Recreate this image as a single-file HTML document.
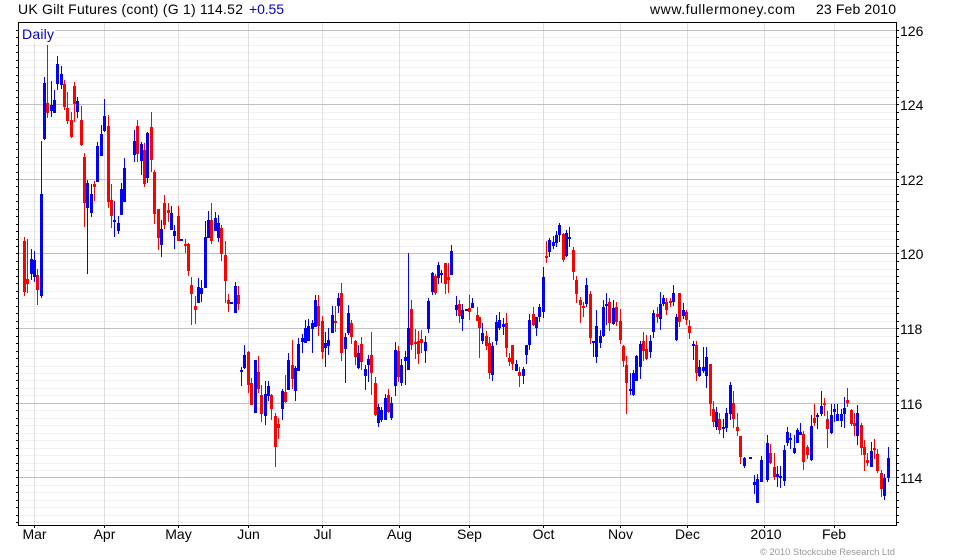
<!DOCTYPE html>
<html><head><meta charset="utf-8"><title>UK Gilt Futures</title>
<style>
html,body{margin:0;padding:0;background:#fff;width:980px;height:560px;overflow:hidden}
svg{display:block}
text{font-family:"Liberation Sans",Arial,sans-serif;font-size:14px;fill:#000}
path,rect{shape-rendering:crispEdges}
</style></head><body>
<svg width="980" height="560" viewBox="0 0 980 560" xmlns="http://www.w3.org/2000/svg">
<rect width="980" height="560" fill="#fff"/>
<defs><path id="h" fill="none" d="M15 30.5H899M15 37.5H899M15 45.5H899M15 52.5H899M15 60.5H899M15 67.5H899M15 75.5H899M15 82.5H899M15 90.5H899M15 97.5H899M15 104.5H899M15 112.5H899M15 119.5H899M15 127.5H899M15 134.5H899M15 142.5H899M15 149.5H899M15 157.5H899M15 164.5H899M15 172.5H899M15 179.5H899M15 186.5H899M15 194.5H899M15 201.5H899M15 209.5H899M15 216.5H899M15 224.5H899M15 231.5H899M15 239.5H899M15 246.5H899M15 253.5H899M15 261.5H899M15 269.5H899M15 276.5H899M15 283.5H899M15 291.5H899M15 298.5H899M15 306.5H899M15 313.5H899M15 321.5H899M15 328.5H899M15 336.5H899M15 343.5H899M15 351.5H899M15 358.5H899M15 366.5H899M15 373.5H899M15 380.5H899M15 388.5H899M15 395.5H899M15 403.5H899M15 410.5H899M15 418.5H899M15 425.5H899M15 433.5H899M15 440.5H899M15 448.5H899M15 455.5H899M15 463.5H899M15 470.5H899M15 477.5H899M15 485.5H899M15 492.5H899M15 500.5H899M15 507.5H899M15 515.5H899M15 522.5H899"/></defs>
<use href="#h" stroke="#000"/>
<rect x="0" y="0" width="16" height="560" fill="#fff"/>
<rect x="19" y="23" width="877" height="502" fill="#fff"/>
<use href="#h" stroke="#f0f0f0" clip-path="url(#plot)"/>
<clipPath id="plot"><rect x="19" y="23" width="877" height="502"/></clipPath>
<path fill="none" stroke="#ddd" d="M34.5 23V528M104.5 23V528M178.5 23V528M248.5 23V528M322.5 23V528M399.5 23V528M469.5 23V528M543.5 23V528M620.5 23V528M687.5 23V528M764.5 23V528M834.5 23V528"/>
<path fill="none" stroke="#c0c0c0" d="M19 30.5H896M19 104.5H896M19 179.5H896M19 253.5H896M19 328.5H896M19 403.5H896M19 477.5H896"/>
<path fill="none" stroke="#f00" d="M24.5 237V296M27.5 239V293M37.5 269V305M47.5 45V118M64.5 80V110M67.5 92V124M71.5 112V138M74.5 82V122M81.5 106V146M84.5 153V227M94.5 181V201M108.5 115V208M111.5 184V228M137.5 120V162M144.5 143V187M151.5 112V172M154.5 170V224M158.5 209V250M164.5 195V229M168.5 203V222M178.5 206V241M185.5 239V253M188.5 243V276M191.5 277V325M195.5 296V324M211.5 203V244M221.5 225V261M225.5 241V303M228.5 294V312M238.5 286V310M248.5 351V393M251.5 378V405M258.5 356V393M261.5 385V422M271.5 394V420M275.5 413V467M278.5 418V439M285.5 375V403M292.5 340V389M318.5 295V336M322.5 316V359M335.5 306V332M341.5 283V361M351.5 320V344M355.5 340V365M361.5 337V370M371.5 332V395M375.5 377V416M388.5 389V413M398.5 346V382M411.5 300V350M415.5 329V359M418.5 331V364M421.5 330V353M435.5 274V295M445.5 263V294M448.5 263V293M459.5 300V323M469.5 295V320M477.5 307V321M479.5 317V358M486.5 331V350M489.5 337V379M506.5 313V357M509.5 353V366M512.5 345V370M519.5 367V387M533.5 307V326M546.5 241V263M563.5 233V262M573.5 247V280M576.5 276V303M580.5 297V323M583.5 302V317M590.5 291V344M609.5 298V331M616.5 302V326M620.5 309V344M623.5 345V367M626.5 356V414M643.5 332V361M646.5 335V360M657.5 307V323M666.5 298V315M670.5 298V307M679.5 293V327M686.5 310V325M689.5 320V339M696.5 341V381M710.5 364V416M713.5 401V427M719.5 413V434M733.5 391V428M737.5 413V436M740.5 436V464M770.5 444V464M774.5 453V480M803.5 431V470M807.5 445V459M814.5 404V426M824.5 398V416M827.5 411V448M847.5 388V407M851.5 409V426M854.5 413V436M861.5 423V455M864.5 440V471M867.5 453V466M874.5 439V459M877.5 449V473M881.5 470V497"/>
<path fill="none" stroke="#f00" stroke-width="3" d="M24.5 241V292M27.5 279V284M37.5 275V290M47.5 103V113M64.5 84V107M67.5 108V121M71.5 120V137M74.5 86V104M81.5 120V145M84.5 157V203M94.5 184V187M108.5 126V202M111.5 200V216M137.5 126V154M144.5 150V184M151.5 127V160M154.5 172V214M158.5 209V238M164.5 203V225M168.5 210V213M178.5 216V241M185.5 244V246M188.5 244V271M191.5 285V294M195.5 306V310M211.5 220V241M221.5 228V254M225.5 255V281M228.5 300V304M238.5 295V304M248.5 352V385M251.5 383V405M258.5 372V389M261.5 395V414M271.5 395V409M275.5 416V447M278.5 424V428M285.5 392V402M292.5 365V379M318.5 306V326M322.5 321V352M335.5 321V323M341.5 293V353M351.5 323V337M355.5 341V357M361.5 344V362M371.5 355V373M375.5 383V415M388.5 395V412M398.5 351V377M411.5 309V345M415.5 342V344M418.5 341V354M421.5 339V343M435.5 276V293M445.5 263V284M448.5 277V280M459.5 304V316M469.5 308V312M477.5 315V321M479.5 317V328M486.5 336V346M489.5 343V373M506.5 323V348M509.5 358V362M512.5 345V364M519.5 372V376M533.5 314V325M546.5 256V258M563.5 234V260M573.5 250V272M576.5 280V294M580.5 300V305M583.5 306V308M590.5 294V338M609.5 302V323M616.5 307V322M620.5 321V340M623.5 346V361M626.5 365V383M643.5 341V351M646.5 349V359M657.5 314V317M666.5 302V310M670.5 301V303M679.5 293V322M686.5 312V320M689.5 326V333M696.5 345V373M710.5 364V404M713.5 409V422M719.5 419V430M733.5 403V419M737.5 427V431M740.5 436V457M770.5 453V463M774.5 467V477M803.5 434V462M807.5 447V455M814.5 418V423M824.5 403V405M827.5 419V429M847.5 400V403M851.5 410V424M854.5 423V426M861.5 425V448M864.5 447V455M867.5 460V463M874.5 448V450M877.5 454V471M881.5 473V489"/>
<path fill="none" stroke="#00f" d="M31.5 249V280M34.5 251V282M41.5 141V298M44.5 77V140M51.5 81V117M54.5 90V113M57.5 56V90M61.5 66V89M77.5 97V118M87.5 180V274M91.5 184V217M97.5 142V182M101.5 125V156M104.5 99V132M114.5 201V237M118.5 216V234M121.5 183V215M124.5 158V202M134.5 130V162M141.5 142V175M147.5 132V183M161.5 220V257M171.5 206V230M174.5 225V249M198.5 278V303M201.5 280V302M205.5 221V288M208.5 211V238M215.5 212V231M218.5 215V242M235.5 282V313M241.5 367V386M244.5 345V369M255.5 360V413M265.5 381V425M268.5 381V401M282.5 389V420M288.5 353V390M295.5 366V401M298.5 338V371M302.5 334V353M305.5 320V343M308.5 319V341M312.5 320V353M315.5 295V327M325.5 332V367M328.5 328V355M332.5 306V333M338.5 293V313M345.5 333V383M348.5 305V335M358.5 345V369M365.5 365V390M368.5 355V382M378.5 404V427M381.5 407V422M385.5 394V420M391.5 397V420M395.5 342V396M401.5 359V386M405.5 351V385M408.5 253V370M425.5 336V363M428.5 298V333M432.5 272V295M438.5 262V284M441.5 270V283M451.5 245V275M456.5 296V316M462.5 304V331M472.5 298V308M482.5 323V344M492.5 342V381M496.5 315V345M499.5 312V330M503.5 318V335M516.5 360V371M523.5 367V384M526.5 345V364M529.5 314V350M536.5 317V336M539.5 304V322M543.5 267V318M549.5 238V257M553.5 236V249M556.5 231V247M559.5 223V242M566.5 230V257M569.5 227V247M586.5 278V307M593.5 341V357M596.5 310V363M600.5 330V348M603.5 300V337M606.5 293V325M613.5 300V325M630.5 373V395M633.5 370V396M636.5 355V381M640.5 341V379M650.5 335V358M653.5 310V338M660.5 292V330M663.5 295V306M673.5 285V306M676.5 314V341M683.5 303V319M693.5 341V360M699.5 360V377M703.5 347V373M706.5 347V388M716.5 407V430M723.5 419V438M726.5 408V432M730.5 382V420M744.5 457V468M754.5 475V494M757.5 474V503M761.5 456V482M767.5 435V482M777.5 466V487M780.5 466V488M784.5 445V486M787.5 427V446M790.5 433V449M794.5 435V454M797.5 428V443M800.5 423V435M811.5 415V461M817.5 413V429M821.5 391V416M831.5 404V434M834.5 404V422M837.5 404V421M841.5 409V427M844.5 397V428M857.5 405V445M871.5 442V467M884.5 474V500M888.5 447V482"/>
<path fill="none" stroke="#00f" stroke-width="3" d="M31.5 259V274M34.5 260V277M41.5 194V296M44.5 83V139M51.5 105V111M54.5 100V113M57.5 64V84M61.5 74V85M77.5 101V112M87.5 183V208M91.5 194V213M97.5 146V182M101.5 134V156M104.5 116V131M114.5 220V222M118.5 223V231M121.5 189V215M124.5 168V202M134.5 141V155M141.5 144V161M147.5 133V178M161.5 229V245M171.5 213V230M174.5 231V236M181.5 239V241M198.5 287V303M201.5 288V294M205.5 237V288M208.5 220V238M215.5 218V231M218.5 223V238M231.5 302V304M235.5 286V313M241.5 370V372M244.5 355V368M255.5 360V413M265.5 394V416M268.5 386V396M282.5 391V409M288.5 360V390M295.5 368V391M298.5 344V371M302.5 338V342M305.5 328V343M308.5 326V341M312.5 323V329M315.5 300V327M325.5 343V348M328.5 340V346M332.5 315V333M338.5 298V306M345.5 337V349M348.5 313V333M358.5 353V368M365.5 369V376M368.5 359V365M378.5 407V423M381.5 410V420M385.5 398V420M391.5 403V418M395.5 350V386M401.5 365V383M405.5 357V361M408.5 328V370M425.5 342V351M428.5 301V329M432.5 273V292M438.5 265V278M441.5 273V275M451.5 251V275M456.5 305V310M462.5 310V319M466.5 309V311M472.5 303V308M482.5 333V341M492.5 346V375M496.5 322V341M499.5 320V328M503.5 324V327M516.5 364V371M523.5 369V376M526.5 345V355M529.5 320V345M536.5 317V328M539.5 307V317M543.5 277V312M549.5 240V252M553.5 242V246M556.5 235V243M559.5 225V235M566.5 233V256M569.5 237V239M586.5 285V304M593.5 341V343M596.5 326V357M600.5 336V343M603.5 307V336M606.5 304V306M613.5 308V324M630.5 389V391M633.5 373V395M636.5 356V381M640.5 344V367M650.5 341V352M653.5 313V332M660.5 304V319M663.5 298V304M673.5 293V302M676.5 317V340M683.5 310V316M693.5 344V346M699.5 367V376M703.5 367V371M706.5 357V376M716.5 412V427M723.5 427V429M726.5 413V428M730.5 385V414M744.5 458V466M750.5 457V459M754.5 482V485M757.5 479V503M761.5 460V482M767.5 443V480M777.5 474V477M780.5 476V478M784.5 450V481M787.5 432V443M790.5 438V440M794.5 448V453M797.5 430V443M800.5 432V435M811.5 426V460M817.5 415V417M821.5 406V414M831.5 415V433M834.5 409V412M837.5 414V421M841.5 414V421M844.5 408V414M857.5 413V436M871.5 451V467M884.5 478V496M888.5 458V478"/>
<rect x="19" y="23" width="36" height="20" fill="#fff"/>
<rect x="18" y="22" width="879" height="1" fill="#000"/>
<rect x="18" y="525" width="879" height="1" fill="#000"/>
<rect x="18" y="22" width="1" height="504" fill="#000"/>
<rect x="896" y="22" width="1" height="504" fill="#000"/>
<path fill="none" stroke="#000" d="M34.5 526V528M104.5 526V528M178.5 526V528M248.5 526V528M322.5 526V528M399.5 526V528M469.5 526V528M543.5 526V528M620.5 526V528M687.5 526V528M764.5 526V528M834.5 526V528"/>
<text x="22" y="39" style="fill:#0000cc" textLength="32">Daily</text>
<text x="18" y="14" textLength="225">UK Gilt Futures (cont) (G 1) 114.52</text>
<text x="249" y="14" style="fill:#0000cc" textLength="35">+0.55</text>
<text x="650" y="14" textLength="145">www.fullermoney.com</text>
<text x="816" y="14" textLength="80">23 Feb 2010</text>
<text x="900" y="36">126</text>
<text x="900" y="110">124</text>
<text x="900" y="185">122</text>
<text x="900" y="259">120</text>
<text x="900" y="334">118</text>
<text x="900" y="409">116</text>
<text x="900" y="483">114</text>
<g text-anchor="middle">
<text x="34.5" y="539">Mar</text>
<text x="104.5" y="539">Apr</text>
<text x="178.5" y="539">May</text>
<text x="248.5" y="539">Jun</text>
<text x="322.5" y="539">Jul</text>
<text x="399.5" y="539">Aug</text>
<text x="469.5" y="539">Sep</text>
<text x="543.5" y="539">Oct</text>
<text x="620.5" y="539">Nov</text>
<text x="687.5" y="539">Dec</text>
<text x="766" y="539">2010</text>
<text x="834" y="539">Feb</text>
</g>
<text x="760" y="555" style="font-size:9.5px;fill:#999" textLength="135">© 2010 Stockcube Research Ltd</text>
</svg>
</body></html>
